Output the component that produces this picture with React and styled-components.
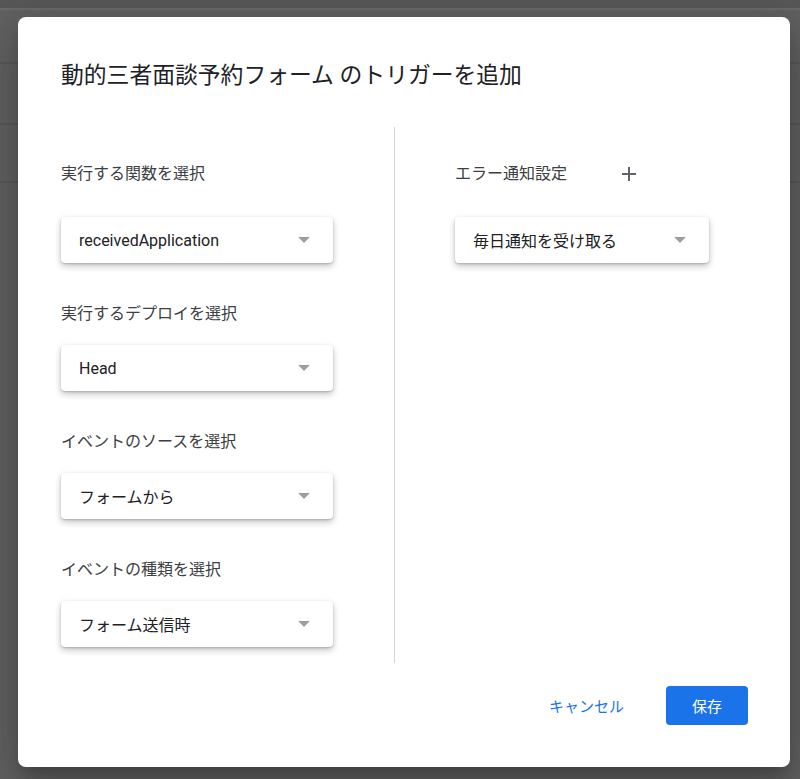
import styled, { createGlobalStyle } from 'styled-components';

const GlobalStyle = createGlobalStyle`
  html, body {
    margin: 0;
    padding: 0;
  }

  body {
    width: 800px;
    height: 779px;
    overflow: hidden;
    font-family: Roboto, 'Noto Sans CJK JP', sans-serif;
    background:
      linear-gradient(#575757 0 8px, #6a6a6a 8px 10px, transparent 10px),
      linear-gradient(transparent 62px, #585858 62px 64px, transparent 64px),
      linear-gradient(transparent 123px, #585858 123px 125px, transparent 125px),
      linear-gradient(transparent 181px, #585858 181px 183px, transparent 183px),
      #616161;
  }
`;

const Page = styled.div`
  box-sizing: border-box;
  width: 800px;
  height: 779px;
  padding: 17px 10px 12px 18px;
  display: flex;
`;

const Dialog = styled.div`
  box-sizing: border-box;
  width: 772px;
  height: 750px;
  background: #fff;
  border-radius: 8px;
  box-shadow: 0 11px 15px -7px rgba(0, 0, 0, 0.2), 0 24px 38px 3px rgba(0, 0, 0, 0.14),
    0 9px 46px 8px rgba(0, 0, 0, 0.12);
  padding: 45px 42px 42px 43px;
  display: flex;
  flex-direction: column;
`;

const Title = styled.h1`
  margin: 0;
  font-family: Roboto, 'Noto Sans CJK JP', sans-serif;
  font-size: 22.8px;
  font-weight: 400;
  line-height: 28px;
  color: #202124;
`;

const Columns = styled.div`
  display: flex;
  margin-top: 37px;
  height: 536px;
`;

const Column = styled.div`
  box-sizing: border-box;
  display: flex;
  flex-direction: column;
  gap: 41px;
  padding-top: 23px;
  padding-left: ${({ $right }) => ($right ? '60px' : '0')};
  width: ${({ $right }) => ($right ? 'auto' : '333px')};
  flex: ${({ $right }) => ($right ? '1' : 'none')};
`;

const Divider = styled.div`
  width: 1px;
  background: #cfd3d8;
  flex: none;
`;

const Field = styled.div`
  display: flex;
  flex-direction: column;
`;

const FieldHeader = styled.div`
  display: flex;
  align-items: center;
  height: ${({ $tall }) => ($tall ? '48px' : '20px')};
  margin-bottom: ${({ $tall }) => ($tall ? '19px' : '21px')};
`;

const Label = styled.span`
  font-size: 16px;
  line-height: 20px;
  color: #3c4043;
`;

const AddButton = styled.button`
  width: 48px;
  height: 48px;
  margin-left: 38px;
  border: none;
  background: none;
  padding: 0;
  display: flex;
  align-items: center;
  justify-content: center;
  color: #5f6368;
  cursor: pointer;
`;

const Select = styled.div`
  box-sizing: border-box;
  width: ${({ $width }) => $width}px;
  height: 46px;
  padding: 0 23px 0 18px;
  display: flex;
  align-items: center;
  justify-content: space-between;
  background: #fff;
  border-radius: 4px;
  box-shadow: 0 1px 2px rgba(0, 0, 0, 0.18), 0 3px 7px rgba(0, 0, 0, 0.24);
  font-size: 16px;
  color: #202124;
  cursor: pointer;
`;

const Arrow = styled.span`
  width: 0;
  height: 0;
  border-left: 6px solid transparent;
  border-right: 6px solid transparent;
  border-top: 6px solid #a0a0a0;
`;

const Footer = styled.div`
  display: flex;
  justify-content: flex-end;
  align-items: center;
  gap: 26px;
  margin-top: 23px;
`;

const TextButton = styled.button`
  height: 39px;
  padding: 0 16px;
  border: none;
  background: none;
  font-family: Roboto, 'Noto Sans CJK JP', sans-serif;
  font-size: 15px;
  color: #1a73e8;
  cursor: pointer;
`;

const PrimaryButton = styled.button`
  width: 82px;
  height: 39px;
  border: none;
  border-radius: 4px;
  background: #1a73e8;
  font-family: Roboto, 'Noto Sans CJK JP', sans-serif;
  font-size: 15px;
  color: #fff;
  cursor: pointer;
`;

function PlusIcon() {
  return (
    <svg width="14" height="14" viewBox="0 0 14 14">
      <path d="M7 0v14M0 7h14" stroke="currentColor" strokeWidth="2" />
    </svg>
  );
}

function Dropdown({ value, width }) {
  return (
    <Select $width={width}>
      <span>{value}</span>
      <Arrow />
    </Select>
  );
}

const LEFT_FIELDS = [
  { label: '実行する関数を選択', value: 'receivedApplication' },
  { label: '実行するデプロイを選択', value: 'Head' },
  { label: 'イベントのソースを選択', value: 'フォームから' },
  { label: 'イベントの種類を選択', value: 'フォーム送信時' },
];

export default function App() {
  return (
    <>
      <GlobalStyle />
      <Page>
        <Dialog role="dialog" aria-labelledby="trigger-title">
          <Title id="trigger-title">動的三者面談予約フォーム のトリガーを追加</Title>
          <Columns>
            <Column>
              {LEFT_FIELDS.map((f, i) => (
                <Field key={f.label}>
                  <FieldHeader $tall={i === 0}>
                    <Label>{f.label}</Label>
                  </FieldHeader>
                  <Dropdown value={f.value} width={272} />
                </Field>
              ))}
            </Column>
            <Divider />
            <Column $right>
              <Field>
                <FieldHeader $tall>
                  <Label>エラー通知設定</Label>
                  <AddButton type="button" aria-label="追加">
                    <PlusIcon />
                  </AddButton>
                </FieldHeader>
                <Dropdown value="毎日通知を受け取る" width={254} />
              </Field>
            </Column>
          </Columns>
          <Footer>
            <TextButton type="button">キャンセル</TextButton>
            <PrimaryButton type="button">保存</PrimaryButton>
          </Footer>
        </Dialog>
      </Page>
    </>
  );
}
